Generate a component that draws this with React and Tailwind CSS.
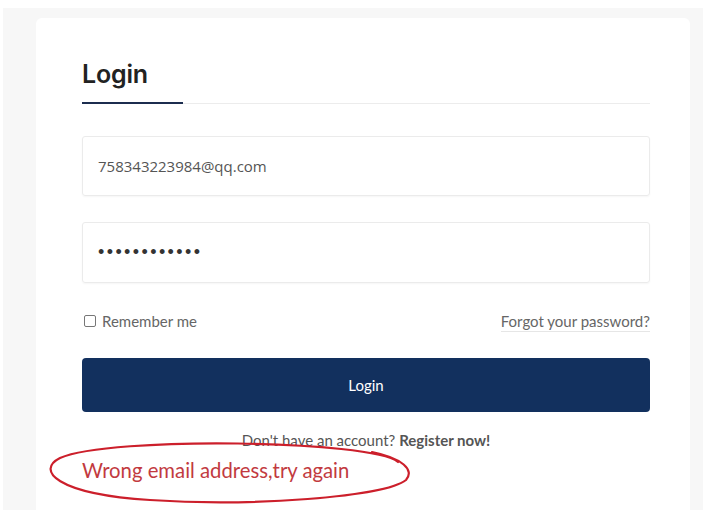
import React from "react";

export default function App() {
  return (
    <div className="relative w-[703px] h-[510px] overflow-hidden bg-white">
      <div className="ml-[3px] mt-[8px] h-[502px] bg-[#f7f7f7] pl-[33px] pr-[13px] pt-[10px]">
        <div className="h-full rounded-t-md bg-white pl-[46px] pr-[40px] pt-[40px] font-['Lato',sans-serif]">
          {/* Heading */}
          <h2 className="font-['Inter',sans-serif] text-[25px] font-semibold leading-[32px] text-[#222] tracking-[-0.2px]">
            Login
          </h2>
          <div className="mt-[12px] flex items-end">
            <div className="h-[2px] w-[101px] bg-[#1c2d4f]" />
            <div className="h-px flex-1 bg-[#ececec]" />
          </div>

          {/* Email */}
          <div className="mt-[32px] flex h-[60px] items-center rounded-[3px] border border-[#ebebeb] pl-[15px] shadow-[0_1px_2px_rgba(0,0,0,0.04)]">
            <span className="font-['Open_Sans',sans-serif] text-[15px] text-[#555]">758343223984@qq.com</span>
          </div>

          {/* Password */}
          <div className="mt-[26px] flex h-[61px] items-center rounded-[3px] border border-[#ebebeb] pl-[15px] shadow-[0_1px_2px_rgba(0,0,0,0.04)]">
            <span className="font-['Liberation_Sans',sans-serif] text-[18px] tracking-[2.4px] text-[#333]">••••••••••••</span>
          </div>

          {/* Remember / forgot */}
          <div className="mt-[27px] flex h-[22px] items-center justify-between text-[15px] text-[#666]">
            <label className="flex items-center gap-[6px]">
              <span className="ml-[2px] inline-block h-[12px] w-[12px] rounded-[2px] border border-[#777] bg-white" />
              <span>Remember me</span>
            </label>
            <span className="border-b border-[#e6e6e6] leading-[20px]">Forgot your password?</span>
          </div>

          {/* Button */}
          <button className="mt-[26px] flex h-[54px] w-full items-center justify-center rounded-[4px] bg-[#12305e] text-[15px] text-white">
            Login
          </button>

          <p className="mt-[18px] text-center text-[15px] leading-[20px] text-[#555]">
            Don't have an account? <span className="font-bold">Register now!</span>
          </p>

          <p className="mt-[7px] text-[20.3px] leading-[26px] text-[#c23a40]">
            Wrong email address,try again
          </p>
        </div>
      </div>

      <svg className="pointer-events-none absolute left-0 top-0" width="703" height="510" viewBox="0 0 703 510">
        <path
          d="M 398 462 C 372 440, 110 436, 60 458 C 36 470, 55 494, 150 500 C 250 507, 385 497, 406 480 C 415 470, 402 458, 372 452"
          fill="none"
          stroke="#cc1f2b"
          strokeWidth="2.2"
          strokeLinecap="round"
        />
      </svg>
    </div>
  );
}
